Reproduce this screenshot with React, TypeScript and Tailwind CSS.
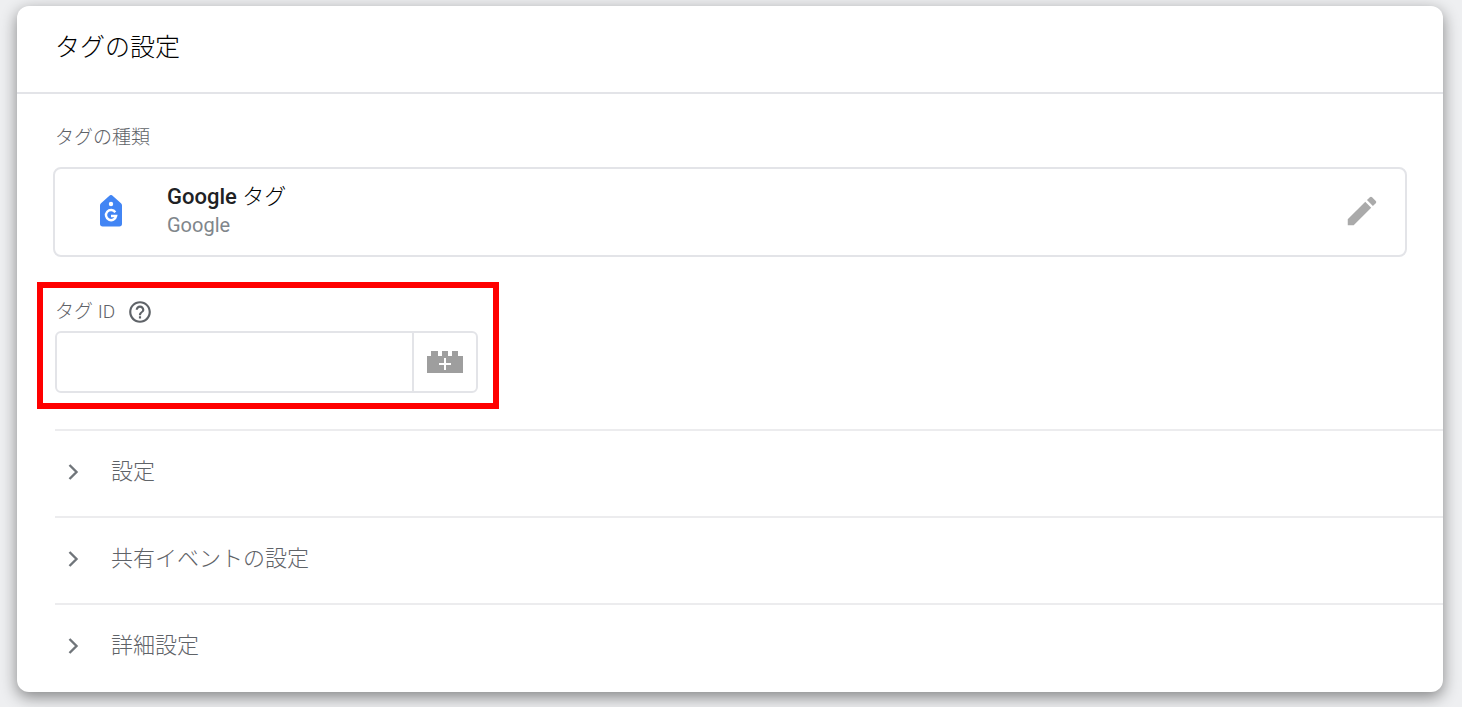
import { useState } from "react";

const sections = ["設定", "共有イベントの設定", "詳細設定"];

function TagIcon() {
  return (
    <svg width="24" height="32" viewBox="0 0 24 32" aria-hidden="true">
      <path d="M10.400.7a2.400 2.400 0 0 1 3.200 0l8.400 7.500a3 3 0 0 1 1 2.200v18.300a2.700 2.700 0 0 1-2.700 2.700H3.700A2.700 2.700 0 0 1 1 28.700V10.400a3 3 0 0 1 1-2.200z" fill="#4285f4" />
      <circle cx="12" cy="9" r="2.200" fill="#fff" />
      <path d="M16.300 17.200a5.100 5.100 0 1 0 .8 3.800H12" fill="none" stroke="#fff" strokeWidth="2.400" />
    </svg>
  );
}

function PencilIcon() {
  return (
    <svg width="38" height="38" viewBox="0 0 24 24" fill="#aaa" aria-hidden="true">
      <path d="M3 17.250V21h3.750L17.810 9.940l-3.750-3.750L3 17.250zM20.710 7.040a1 1 0 0 0 0-1.410l-2.340-2.340a1 1 0 0 0-1.410 0l-1.830 1.830 3.750 3.750 1.830-1.830z" />
    </svg>
  );
}

function HelpIcon() {
  return (
    <svg width="26" height="26" viewBox="0 0 24 24" fill="#5f6368" aria-hidden="true">
      <path d="M11 18h2v-2h-2v2zm1-16C6.480 2 2 6.480 2 12s4.480 10 10 10 10-4.480 10-10S17.520 2 12 2zm0 18c-4.410 0-8-3.590-8-8s3.590-8 8-8 8 3.590 8 8-3.590 8-8 8zm0-14c-2.210 0-4 1.790-4 4h2c0-1.100.9-2 2-2s2 .9 2 2c0 2-3 1.750-3 5h2c0-2.250 3-2.500 3-5 0-2.210-1.790-4-4-4z" />
    </svg>
  );
}

function BrickIcon() {
  return (
    <svg width="36" height="22" viewBox="0 0 36 22" aria-hidden="true">
      <path d="M0 5h4V0h7v5h4V0h6v5h4V0h6v5h5v17H0z" fill="#9e9e9e" />
      <path d="M18 7v12M12 13h12" stroke="#fff" strokeWidth="2" />
    </svg>
  );
}

function ChevronIcon({ open }: { open: boolean }) {
  return (
    <svg
      width="12"
      height="18"
      viewBox="0 0 12 18"
      className={open ? "rotate-90" : ""}
      aria-hidden="true"
    >
      <path d="M2.500 2l7 7-7 7" fill="none" stroke="#70757a" strokeWidth="2.400" />
    </svg>
  );
}

export default function App() {
  const [tagId, setTagId] = useState("");
  const [openSection, setOpenSection] = useState("");

  return (
    <div className="min-h-screen bg-[#eeeff1] pt-1.5 pr-[19px] pb-3.5 pl-[17px] font-['Roboto','Noto_Sans_CJK_JP',sans-serif] font-light">
      <main className="rounded-xl bg-white pb-0.5 shadow-[0_5px_16px_rgba(0,0,0,0.45)]">
        <header className="border-b-2 border-[#e3e4e8] px-[38px] pt-[22px] pb-6">
          <h1 className="text-[25px] leading-10 text-black">タグの設定</h1>
        </header>

        {/* タグの種類 */}
        <section className="px-9 pt-8">
          <h2 className="px-0.5 text-[19px] leading-6 text-[#5f6368]">タグの種類</h2>
          <div className="mt-[17px] flex items-center rounded-lg border-2 border-[#e3e4e8] pt-3 pb-3.5 pr-6 pl-11">
            <TagIcon />
            <div className="ml-11 grow pb-1">
              <p className="text-[22px] leading-8 text-black">
                <span className="font-medium text-[#202124]">Google</span> タグ
              </p>
              <p className="text-[20px] leading-6 font-normal text-[#80868b]">Google</p>
            </div>
            <button type="button" aria-label="編集">
              <PencilIcon />
            </button>
          </div>
        </section>

        {/* タグ ID */}
        <section className="mt-[25px] ml-5 w-[462px] max-w-full border-6 border-[#ff0000] px-3 pt-3 pb-2.5">
          <div className="flex h-6 items-center gap-3 text-[19px] text-[#5f6368]">
            <label htmlFor="tag-id">タグ ID</label>
            <button type="button" aria-label="ヘルプ">
              <HelpIcon />
            </button>
          </div>
          <div className="mt-[7px] mr-[3px] flex h-[62px] rounded-md border-2 border-[#e3e4e8]">
            <input
              id="tag-id"
              type="text"
              value={tagId}
              onChange={(e) => setTagId(e.target.value)}
              className="min-w-0 grow px-3 text-[20px] text-[#202124] outline-none"
            />
            <button
              type="button"
              aria-label="変数を選択"
              className="flex w-16 items-center justify-center border-l-2 border-[#e3e4e8]"
            >
              <BrickIcon />
            </button>
          </div>
        </section>

        <div className="mt-5 pl-[38px]">
          {sections.map((name) => (
            <button
              key={name}
              type="button"
              aria-expanded={openSection === name}
              onClick={() => setOpenSection(openSection === name ? "" : name)}
              className="flex h-[87px] w-full items-center gap-8 border-t-2 border-[#ececee] pb-1 pl-3 text-left text-[22px] text-[#5f6368]"
            >
              <ChevronIcon open={openSection === name} />
              {name}
            </button>
          ))}
        </div>
      </main>
    </div>
  );
}
